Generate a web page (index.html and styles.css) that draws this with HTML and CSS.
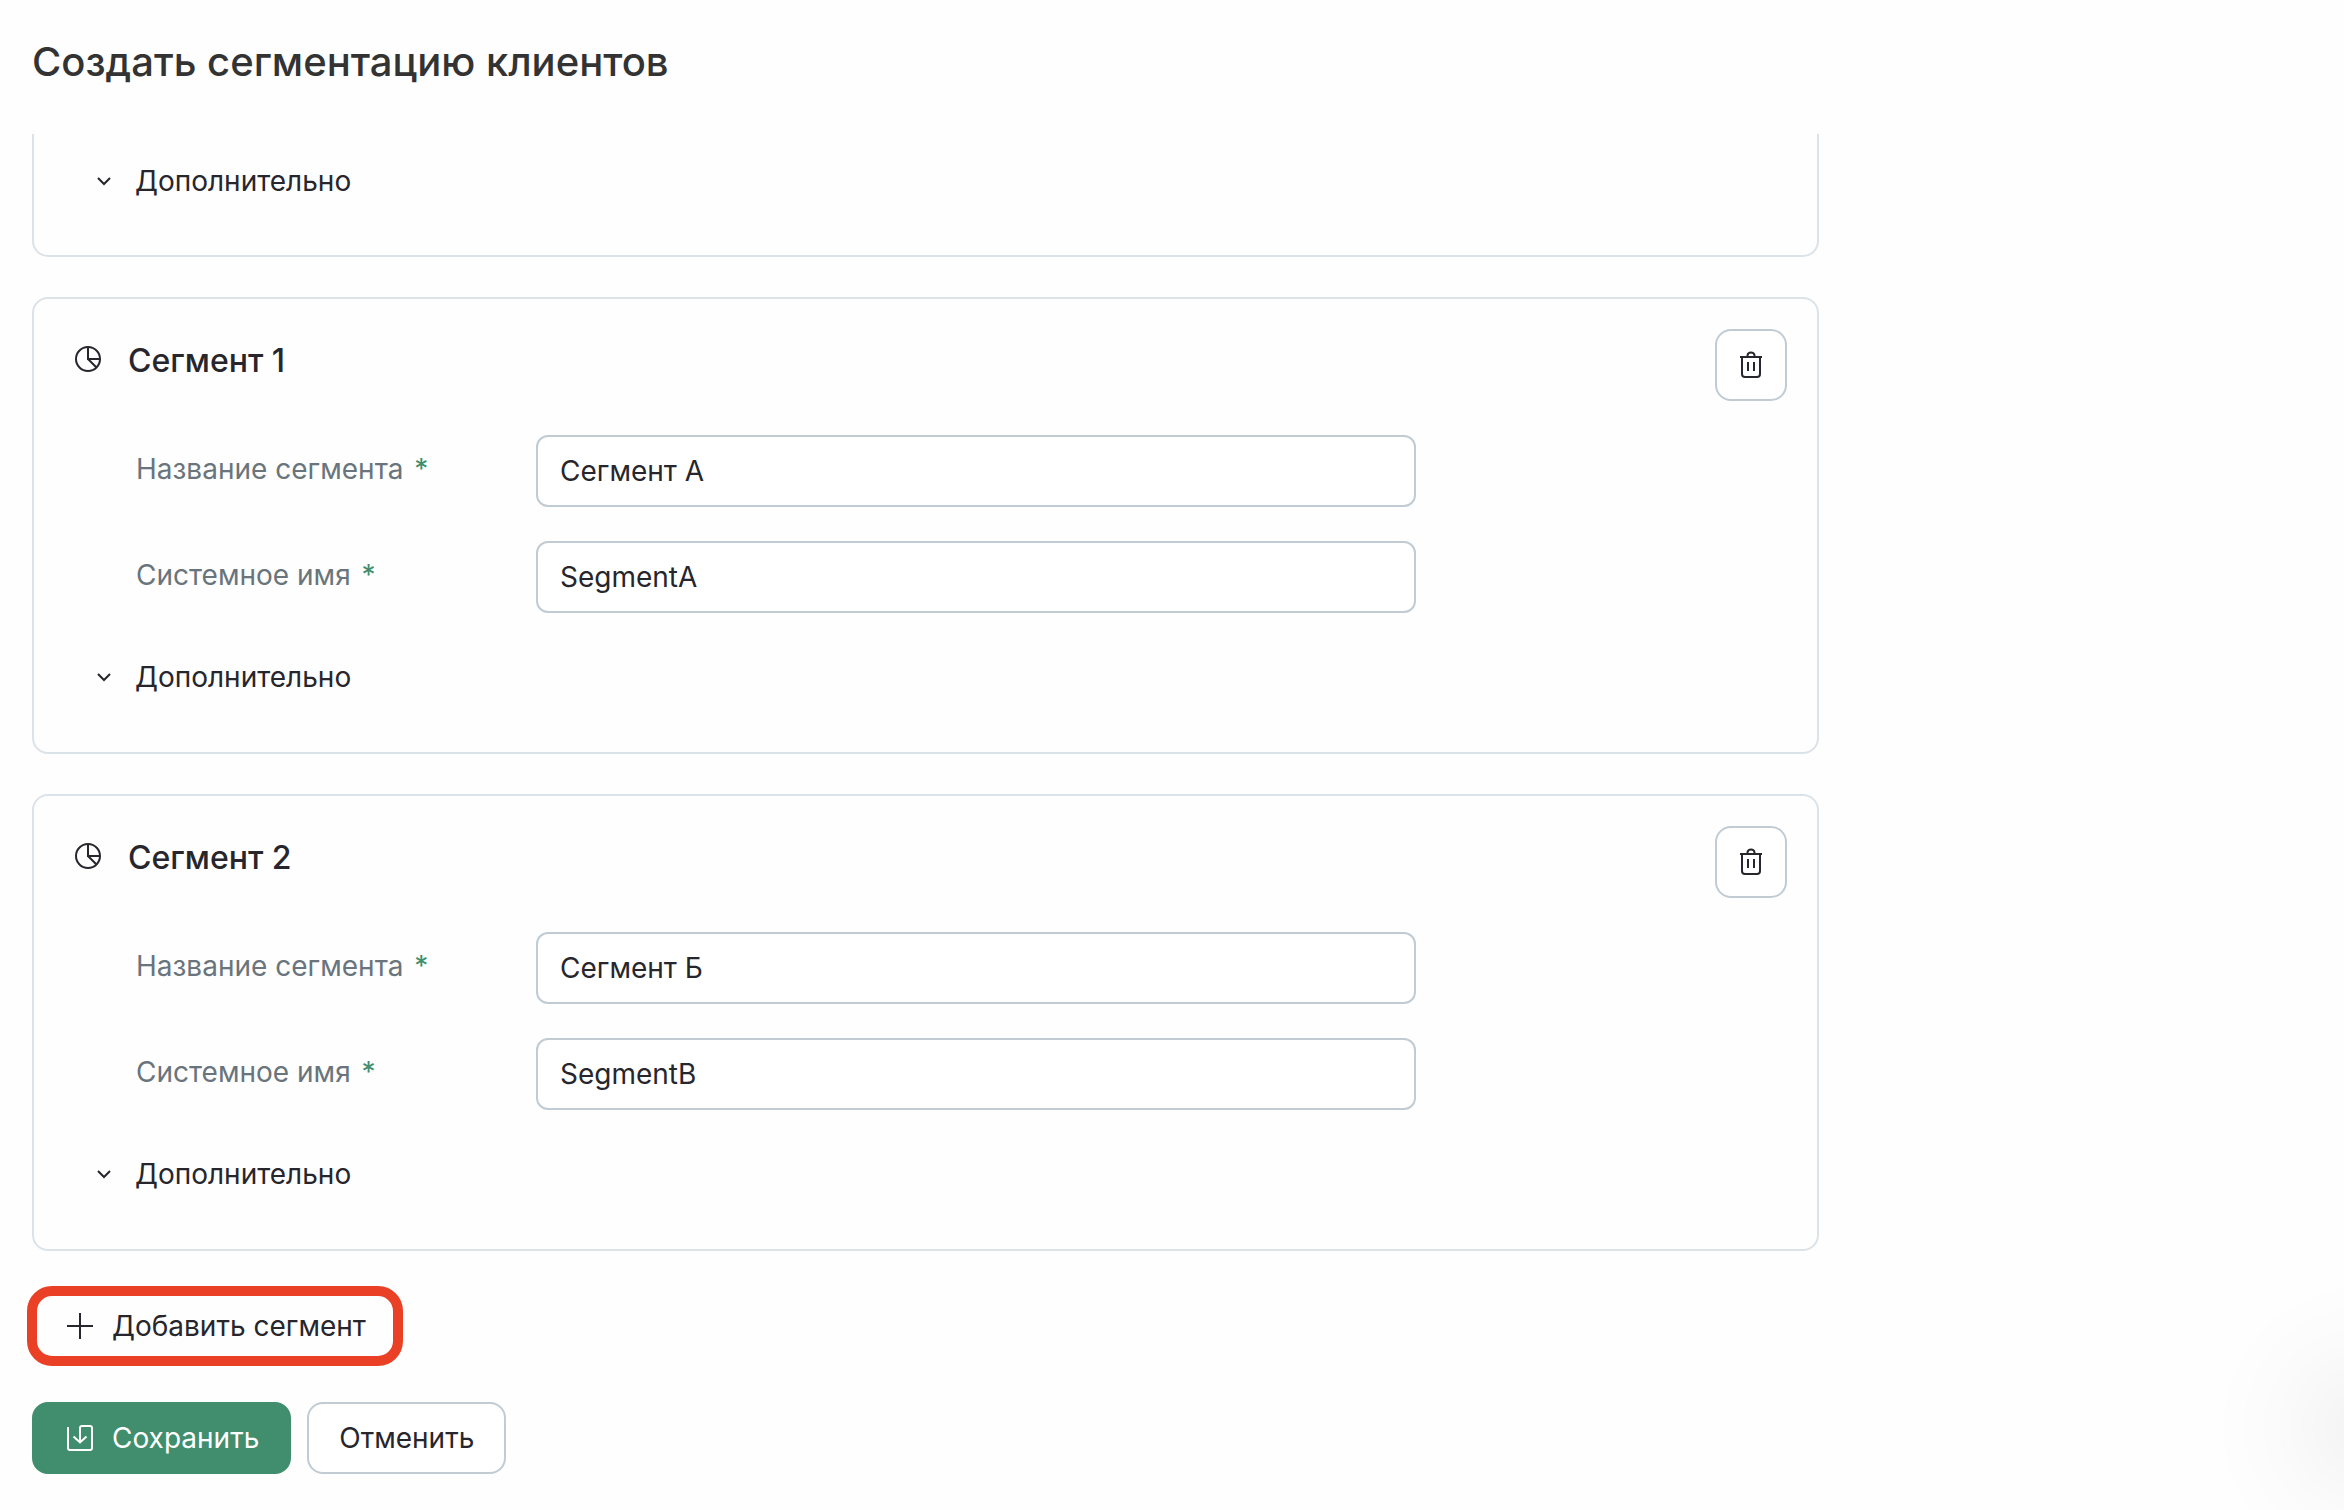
FILE: index.html
```html
<!DOCTYPE html>
<html lang="ru">
<head>
<meta charset="utf-8">
<meta name="viewport" content="width=device-width, initial-scale=1">
<title>Создать сегментацию клиентов</title>
<link rel="stylesheet" href="styles.css">
</head>
<body>
<svg class="sprite" aria-hidden="true">
  <symbol id="chevron" viewBox="0 0 16 16"><path d="M2 5l6 6 6-6"/></symbol>
  <symbol id="pie" viewBox="0 0 28 28"><circle cx="14" cy="14" r="12"/><path d="M14 2v12h12M14 14l8.500 8.500"/></symbol>
  <symbol id="trash" viewBox="0 0 28 28"><path d="M3 6h22M5 6v17a3 3 0 0 0 3 3h12a3 3 0 0 0 3-3V6M10.500 6V4.500a3.500 3 0 0 1 7 0V6M11 11v9M17 11v9"/></symbol>
  <symbol id="plus" viewBox="0 0 26 26"><path d="M13 0v26M0 13h26"/></symbol>
  <symbol id="save" viewBox="0 0 26 26"><path d="M1 2v21a2 2 0 0 0 2 2h20a2 2 0 0 0 2-2V3a2 2 0 0 0-2-2h-8a2 2 0 0 0-2 2v14M6.500 11.500l6.500 6 6.500-6"/></symbol>
</svg>
<header class="page-header">
  <h1 class="page-title">Создать сегментацию клиентов</h1>
</header>
<main class="content">
  <section class="card card-clipped">
    <button class="toggle" type="button" aria-expanded="false"><svg class="icon chevron"><use href="#chevron"/></svg>Дополнительно</button>
  </section>

  <section class="card">
    <div class="card-head">
      <svg class="icon pie"><use href="#pie"/></svg>
      <h2 class="card-title">Сегмент 1</h2>
      <button class="button button-icon" type="button" aria-label="Удалить"><svg class="icon trash"><use href="#trash"/></svg></button>
    </div>
    <div class="field">
      <label class="label" for="name-1">Название сегмента <span class="required">*</span></label>
      <input class="input" id="name-1" type="text" value="Сегмент А">
    </div>
    <div class="field">
      <label class="label" for="system-1">Системное имя <span class="required">*</span></label>
      <input class="input" id="system-1" type="text" value="SegmentA">
    </div>
    <button class="toggle" type="button" aria-expanded="false"><svg class="icon chevron"><use href="#chevron"/></svg>Дополнительно</button>
  </section>

  <section class="card">
    <div class="card-head">
      <svg class="icon pie"><use href="#pie"/></svg>
      <h2 class="card-title">Сегмент 2</h2>
      <button class="button button-icon" type="button" aria-label="Удалить"><svg class="icon trash"><use href="#trash"/></svg></button>
    </div>
    <div class="field">
      <label class="label" for="name-2">Название сегмента <span class="required">*</span></label>
      <input class="input" id="name-2" type="text" value="Сегмент Б">
    </div>
    <div class="field">
      <label class="label" for="system-2">Системное имя <span class="required">*</span></label>
      <input class="input" id="system-2" type="text" value="SegmentB">
    </div>
    <button class="toggle" type="button" aria-expanded="false"><svg class="icon chevron"><use href="#chevron"/></svg>Дополнительно</button>
  </section>

  <button class="add-button" type="button"><svg class="icon glyph"><use href="#plus"/></svg>Добавить сегмент</button>
</main>
<footer class="actions">
  <button class="button button-primary" type="button"><svg class="icon glyph"><use href="#save"/></svg>Сохранить</button>
  <button class="button" type="button">Отменить</button>
</footer>
<div class="corner-shadow"></div>
</body>
</html>
```
FILE: styles.css
```css
* {
  box-sizing: border-box;
}

body {
  margin: 0;
  background: #fefefe;
  color: #26262c;
  font: 400 28px/40px Inter, "Liberation Sans", sans-serif;
}

button,
input {
  font: inherit;
  color: inherit;
}

button {
  cursor: pointer;
}

.sprite {
  display: none;
}

.icon {
  flex: none;
  fill: none;
  stroke: currentColor;
  stroke-width: 2;
}

.page-header {
  padding: 34px 32px 44px;
}

.page-title {
  margin: 0;
  color: #333;
  font-size: 40px;
  font-weight: 500;
  line-height: 56px;
}

.content {
  display: flex;
  flex-direction: column;
  align-items: flex-start;
  gap: 40px;
  padding: 0 32px;
}

.card {
  display: flex;
  flex-direction: column;
  gap: 34px;
  width: 100%;
  max-width: 1787px;
  padding: 30px 30px 45px 38px;
  border: 2px solid #dbe2e8;
  border-radius: 16px;
}

.card-clipped {
  padding-top: 17px;
  padding-bottom: 44px;
  border-top: 0;
  border-radius: 0 0 16px 16px;
}

.card-head {
  display: flex;
  align-items: flex-start;
  gap: 26px;
}

.pie {
  width: 28px;
  height: 28px;
  margin: 16px 0 0 2px;
}

.card-title {
  flex: 1;
  margin: 0;
  font-size: 32px;
  font-weight: 500;
  line-height: 64px;
}

.field {
  display: grid;
  grid-template-columns: 400px minmax(0, 880px);
  padding-left: 64px;
}

.label {
  padding-top: 14px;
  color: #69747c;
}

.required {
  margin-left: 3px;
  color: #408e6d;
}

.input {
  width: 100%;
  height: 72px;
  padding: 0 22px;
  border: 2px solid #c0cbd4;
  border-radius: 12px;
  background: #fff;
}

.toggle {
  display: flex;
  align-items: center;
  align-self: flex-start;
  gap: 23px;
  height: 60px;
  margin-left: 24px;
  padding: 0;
  border: 0;
  background: none;
}

.chevron {
  width: 16px;
  height: 16px;
}

.button {
  display: flex;
  align-items: center;
  justify-content: center;
  gap: 19px;
  height: 72px;
  padding: 0 30px;
  border: 2px solid #c0cbd4;
  border-radius: 16px;
  background: #fff;
}

.button-icon {
  width: 72px;
  padding: 0;
}

.trash {
  width: 28px;
  height: 28px;
}

.button-primary {
  padding-left: 33px;
  border-color: #408e6d;
  background: #408e6d;
  color: #fff;
}

.glyph {
  width: 26px;
  height: 26px;
}

.add-button {
  display: flex;
  align-items: center;
  gap: 19px;
  height: 70px;
  padding: 0 32px 0 35px;
  border: 0;
  border-radius: 20px;
  outline: 10px solid #ea4025;
  outline-offset: -5px;
  background: none;
}

.actions {
  display: flex;
  gap: 16px;
  padding: 41px 32px 36px;
}

.corner-shadow {
  position: fixed;
  right: 0;
  bottom: 0;
  width: 120px;
  height: 240px;
  background: radial-gradient(circle at 140px 157px, rgba(0, 0, 0, 0.045), rgba(0, 0, 0, 0.01) 90px, transparent 150px);
  pointer-events: none;
}
```
